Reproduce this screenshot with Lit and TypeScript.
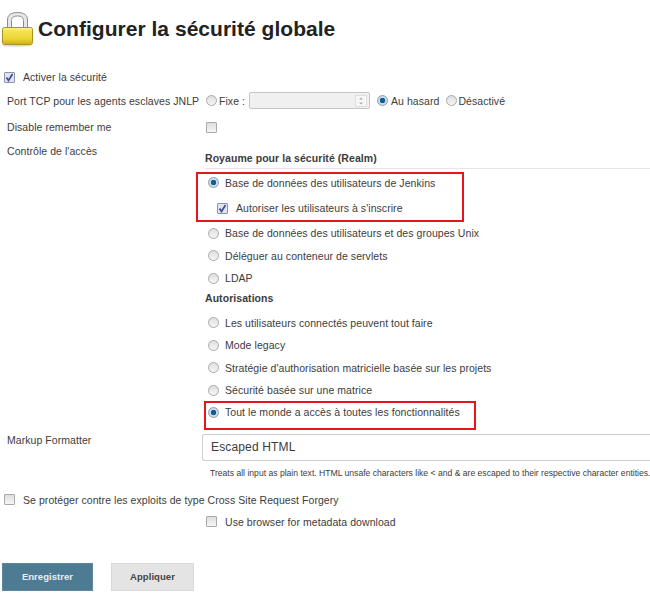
import { LitElement, html, css, svg } from "lit";
import { customElement } from "lit/decorators.js";

const lock = svg`
  <defs>
    <linearGradient id="body" x1="0" y1="0" x2="0" y2="1">
      <stop offset="0" stop-color="#f5ea64" />
      <stop offset="0.65" stop-color="#ecd632" />
      <stop offset="1" stop-color="#cfae1e" />
    </linearGradient>
  </defs>
  <ellipse cx="17" cy="38.500" rx="15" ry="1.500" fill="#ddd" />
  <path d="M7.500 21V13C7.500 8 11 5.500 17.500 5.500S27.500 8 27.500 13V21H23.500V13.500C23.500 10.500 21.500 9 17.500 9S11.500 10.500 11.500 13.500V21Z" fill="#e6e6e6" stroke="#8c8c8c" />
  <rect x="2.500" y="20.500" width="30" height="17" rx="2" fill="url(#body)" stroke="#ad9120" />
  <path d="M3.500 22H31.500" stroke="#faf5a8" />
`;

@customElement("app-root")
export class AppRoot extends LitElement {
  static styles = css`
    :host {
      display: block;
      width: 650px;
      height: 600px;
      overflow: hidden;
      background: #fff;
      color: #3c3c3c;
      font: 10.5px "Liberation Sans", Arial, sans-serif;
      letter-spacing: 0.06px;
    }
    .title {
      display: flex;
      align-items: center;
      gap: 2px;
      height: 46px;
      padding-top: 7px;
    }
    .title svg {
      width: 36px;
      height: 46px;
      flex: none;
    }
    h1 {
      margin: 0 0 2px;
      font-size: 21px;
      line-height: 24px;
      letter-spacing: 0.03px;
      color: #222;
    }
    .form {
      padding-top: 14px;
    }
    .row {
      display: grid;
      grid-template-columns: 205px 1fr;
      align-items: center;
    }
    .row.start {
      align-items: start;
    }
    .label {
      padding-left: 7px;
    }
    .top {
      display: flex;
      align-items: center;
      height: 20px;
      padding-left: 4px;
    }
    .opt {
      display: flex;
      align-items: center;
      height: 22.500px;
      padding-left: 3px;
    }
    .box,
    .radio {
      flex: none;
      box-sizing: border-box;
      width: 11px;
      height: 11px;
      background: linear-gradient(#dedede, #f6f6f6);
      border: 1px solid #a9a9a9;
    }
    .box {
      display: flex;
      border-radius: 1px;
    }
    .box svg {
      width: 9px;
      height: 9px;
    }
    .box.on {
      background: #dfe3f3;
      border-color: #8d94a8;
    }
    .radio {
      border-radius: 50%;
    }
    .radio.on {
      background: radial-gradient(circle, #0f5f93 0 2.500px, #c9dbe8 3px);
      border-color: #8aa0b0;
    }
    .gap {
      margin-right: 6px;
    }
    .check-gap {
      margin-left: 8px;
    }
    .port {
      display: flex;
      align-items: center;
      height: 27px;
      padding-left: 1px;
    }
    .fixe {
      margin: 0 4px 0 2px;
    }
    .hasard {
      margin: 0 7px 0 3px;
    }
    .off {
      margin-left: 1px;
    }
    .spin {
      box-sizing: border-box;
      display: flex;
      justify-content: flex-end;
      align-items: center;
      width: 121px;
      height: 17px;
      margin-right: 7px;
      padding-right: 2px;
      background: #f0f0f0;
      border: 1px solid #c6c6c6;
      border-radius: 2px;
    }
    .spin svg {
      width: 12px;
      height: 12px;
    }
    .remember {
      height: 26px;
    }
    .remember .cell {
      padding-left: 1px;
    }
    .access {
      padding-top: 5px;
    }
    .section {
      font-weight: bold;
      height: 19px;
      line-height: 19px;
      border-bottom: 1px solid #e6e6e6;
    }
    .realm {
      margin-top: 9px;
    }
    .authz {
      margin: -1px 0 4px;
      border-bottom: 0;
    }
    .mark {
      box-sizing: border-box;
      border: 2px solid #e8131b;
    }
    .mark .opt {
      padding-left: 0;
    }
    .mark.one {
      width: 268px;
      height: 50px;
      margin: 3px 0 0 -9px;
      padding-left: 10px;
    }
    .mark.one .opt {
      height: 17px;
    }
    .mark.one .sub {
      height: 26px;
      margin-top: 4px;
      padding-left: 9px;
    }
    .mark.two {
      width: 272px;
      height: 29px;
      margin: -1px 0 0 -1px;
      padding-left: 2px;
    }
    .mark.two .opt {
      height: 19px;
    }
    .markup {
      margin-top: 4px;
    }
    .select-wrap {
      margin-left: -3px;
    }
    .select {
      box-sizing: border-box;
      display: flex;
      align-items: center;
      height: 27px;
      padding-left: 8px;
      font-size: 12px;
      letter-spacing: 0.15px;
      background: #fff;
      border: 1px solid #cfcfcf;
      border-right: 0;
      border-radius: 3px 0 0 3px;
    }
    .help {
      margin-top: 6px;
      padding-left: 8px;
      font-size: 8.600px;
      line-height: 12px;
      letter-spacing: 0;
      white-space: nowrap;
    }
    .csrf {
      margin-top: 11px;
    }
    .browser {
      height: 24px;
    }
    .browser .opt {
      padding-left: 1px;
    }
    .buttons {
      display: flex;
      gap: 18px;
      margin: 29px 0 0 2px;
    }
    .btn {
      box-sizing: border-box;
      display: flex;
      align-items: center;
      justify-content: center;
      height: 28px;
      font-size: 9.500px;
      font-weight: bold;
      letter-spacing: 0.05px;
    }
    .save {
      width: 91px;
      color: #e8eef2;
      background: #4d7b94;
      border: 1px solid #5d879e;
    }
    .apply {
      width: 83px;
      color: #444;
      background: #e4e4e4;
      border: 1px solid #d8d8d8;
    }
  `;

  private check(on = false) {
    return html`<span class="box ${on ? "on" : ""}">
      ${on
        ? html`<svg viewBox="0 0 9 9"><path d="M1.500 4.500L3.500 7.500L7.500 1" fill="none" stroke="#3f4f8f" stroke-width="1.700" /></svg>`
        : ""}
    </span>`;
  }

  private option(text: string, on = false) {
    return html`<div class="opt">
      <span class="radio gap ${on ? "on" : ""}"></span><span>${text}</span>
    </div>`;
  }

  render() {
    return html`
      <div class="title">
        <svg viewBox="0 0 36 46">${lock}</svg>
        <h1>Configurer la sécurité globale</h1>
      </div>
      <div class="form">
        <div class="top">${this.check(true)}<span class="check-gap">Activer la sécurité</span></div>
        <div class="row">
          <div class="label">Port TCP pour les agents esclaves JNLP</div>
          <div class="port">
            <span class="radio"></span><span class="fixe">Fixe :</span>
            <div class="spin">
              <svg viewBox="0 0 12 12">
                <rect x="0.500" y="0.500" width="11" height="11" fill="#f7f7f7" stroke="#ddd" />
                <path d="M6 2.500L8 4.500H4ZM6 9.500L8 7.500H4Z" fill="#a8a8a8" />
              </svg>
            </div>
            <span class="radio on"></span><span class="hasard">Au hasard</span>
            <span class="radio"></span><span class="off">Désactivé</span>
          </div>
        </div>
        <div class="row remember">
          <div class="label">Disable remember me</div>
          <div class="cell">${this.check()}</div>
        </div>
        <div class="row start">
          <div class="label access">Contrôle de l'accès</div>
          <div>
            <div class="section realm">Royaume pour la sécurité (Realm)</div>
            <div class="mark one">
              ${this.option("Base de données des utilisateurs de Jenkins", true)}
              <div class="opt sub">${this.check(true)}<span class="check-gap">Autoriser les utilisateurs à s'inscrire</span></div>
            </div>
            ${this.option("Base de données des utilisateurs et des groupes Unix")}
            ${this.option("Déléguer au conteneur de servlets")}
            ${this.option("LDAP")}
            <div class="section authz">Autorisations</div>
            ${this.option("Les utilisateurs connectés peuvent tout faire")}
            ${this.option("Mode legacy")}
            ${this.option("Stratégie d'authorisation matricielle basée sur les projets")}
            ${this.option("Sécurité basée sur une matrice")}
            <div class="mark two">
              ${this.option("Tout le monde a accès à toutes les fonctionnalités", true)}
            </div>
          </div>
        </div>
        <div class="row start markup">
          <div class="label">Markup Formatter</div>
          <div class="select-wrap">
            <div class="select">Escaped HTML</div>
            <div class="help">Treats all input as plain text. HTML unsafe characters like &lt; and &amp; are escaped to their respective character entities.</div>
          </div>
        </div>
        <div class="top csrf">${this.check()}<span class="check-gap">Se protéger contre les exploits de type Cross Site Request Forgery</span></div>
        <div class="row browser">
          <div></div>
          <div class="opt">${this.check()}<span class="check-gap">Use browser for metadata download</span></div>
        </div>
        <div class="buttons">
          <div class="btn save">Enregistrer</div>
          <div class="btn apply">Appliquer</div>
        </div>
      </div>
    `;
  }
}
